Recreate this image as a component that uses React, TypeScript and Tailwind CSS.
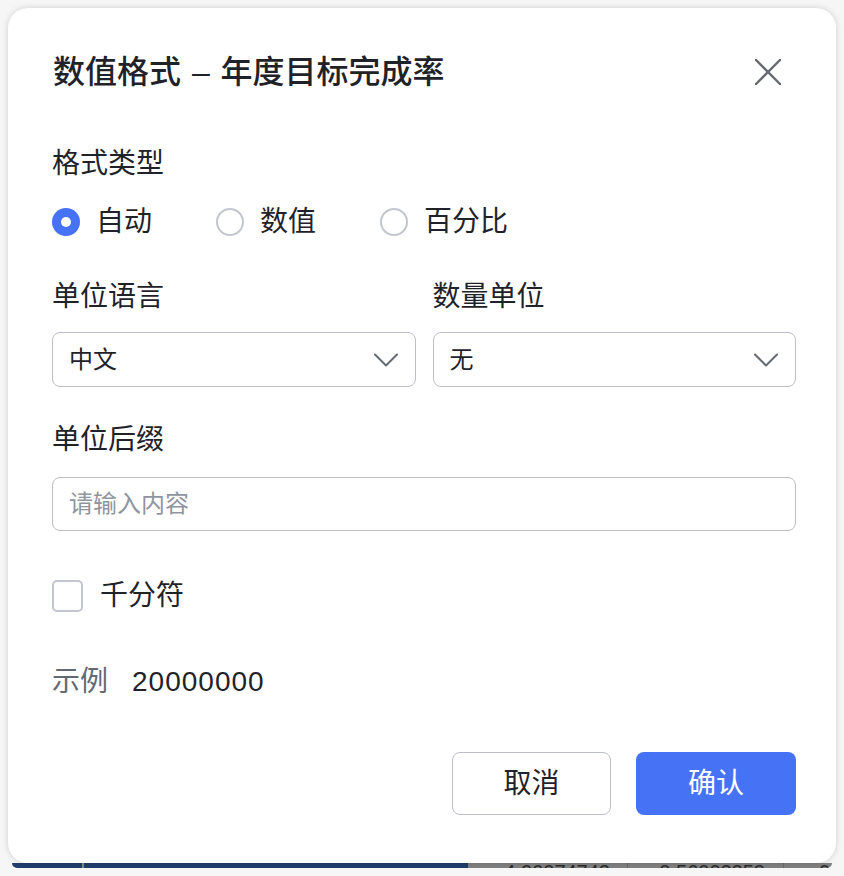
const font = { fontFamily: '"Liberation Sans", "Noto Sans CJK SC", sans-serif' };

function Chevron() {
  return (
    <svg width="24" height="24" viewBox="0 0 24 24" fill="none" className="text-[#646a73]">
      <path d="M1 6.5l11 11 11-11" stroke="currentColor" strokeWidth="2" strokeLinecap="round" strokeLinejoin="round" />
    </svg>
  );
}

function CloseIcon() {
  return (
    <svg width="26" height="26" viewBox="0 0 26 26" fill="none" className="mr-[15px] text-[#646a73]">
      <path d="M1 1l24 24M25 1L1 25" stroke="currentColor" strokeWidth="2.4" strokeLinecap="round" />
    </svg>
  );
}

function Radio({ label, checked }: { label: string; checked?: boolean }) {
  return (
    <label className="flex items-center gap-[16px]">
      {checked ? (
        <span className="flex size-[28px] items-center justify-center rounded-full bg-[#4673f6]">
          <span className="size-[10px] rounded-full bg-white" />
        </span>
      ) : (
        <span className="size-[28px] rounded-full border-2 border-[#c3c6cc] bg-white" />
      )}
      <span className="text-[28px] leading-[40px] text-[#1f2329]">{label}</span>
    </label>
  );
}

function Select({ value }: { value: string }) {
  return (
    <div className="flex h-[55px] flex-1 items-center justify-between rounded-[8px] border-[1.5px] border-[#bcc0c6] bg-white pl-[16px] pr-[17px]">
      <span className="text-[24px] text-[#1f2329]">{value}</span>
      <Chevron />
    </div>
  );
}

export default function App() {
  return (
    <div className="min-h-[876px] w-[844px] bg-[#f6f6f6] p-[8px]" style={font}>
      <div className="flex w-[828px] flex-col">
        <div className="relative z-10 flex h-[855px] flex-col rounded-[20px] bg-white pl-[44px] pr-[40px] pt-[44px] shadow-[0_0_6px_rgba(0,0,0,0.16)]">
          <div className="flex h-[40px] items-center justify-between">
            <h2 className="pl-px text-[32px] font-medium leading-[40px] text-[#1f2329]">
              数值格式 <span className="px-[2px]">–</span> 年度目标完成率
            </h2>
            <CloseIcon />
          </div>

          <div className="mt-[52px] text-[28px] leading-[40px] text-[#1f2329]">格式类型</div>
          <div className="mt-[18px] flex h-[40px] items-center gap-[64px]">
            <Radio label="自动" checked />
            <Radio label="数值" />
            <Radio label="百分比" />
          </div>

          <div className="mt-[35px] flex gap-[17px]">
            <div className="flex flex-1 flex-col">
              <div className="text-[28px] leading-[40px] text-[#1f2329]">单位语言</div>
              <div className="mt-[15px] flex">
                <Select value="中文" />
              </div>
            </div>
            <div className="flex flex-1 flex-col">
              <div className="text-[28px] leading-[40px] text-[#1f2329]">数量单位</div>
              <div className="mt-[15px] flex">
                <Select value="无" />
              </div>
            </div>
          </div>

          <div className="mt-[33px] text-[28px] leading-[40px] text-[#1f2329]">单位后缀</div>
          <input
            className="mt-[17px] h-[54px] w-full rounded-[8px] border-[1.5px] border-[#bcc0c6] bg-white px-[16px] text-[24px] text-[#1f2329] outline-none placeholder:text-[#8f959e]"
            placeholder="请输入内容"
          />

          <label className="mt-[45px] flex h-[40px] items-center gap-[17px]">
            <span className="h-[32px] w-[31px] rounded-[5px] border-2 border-[#c3c6cc] bg-white" />
            <span className="text-[28px] leading-[40px] text-[#1f2329]">千分符</span>
          </label>

          <div className="mt-[46px] flex h-[40px] items-center gap-[24px] text-[28px] leading-[40px]">
            <span className="text-[#646a73]">示例</span>
            <span className="tracking-[1px] text-[#1f2329]">20000000</span>
          </div>

          <div className="mt-[50px] flex justify-end gap-[25px]">
            <button
              type="button"
              className="h-[63px] w-[159px] rounded-[8px] border-[1.5px] border-[#bcc0c6] bg-white text-[28px] text-[#1f2329]"
            >
              取消
            </button>
            <button
              type="button"
              className="h-[63px] w-[160px] rounded-[8px] bg-[#4673f6] text-[28px] text-white"
            >
              确认
            </button>
          </div>
        </div>

        <div className="mx-[4px] flex h-[5px] overflow-hidden rounded-b-[14px] text-[20px] leading-none text-[#2b2b2b]">
          <div className="w-[70px] bg-[#213e6c]" />
          <div className="w-[2px] bg-[#8a8a8a]" />
          <div className="w-[384px] bg-[#213e6c]" />
          <div className="flex w-[159px] justify-end bg-[#808080] pr-[17px]">
            <span className="-mt-px">4.00074742</span>
          </div>
          <div className="w-px bg-[#6a6a6a]" />
          <div className="flex w-[155px] justify-end bg-[#808080] pr-[18px]">
            <span className="-mt-px">0.56002253</span>
          </div>
          <div className="w-px bg-[#6a6a6a]" />
          <div className="flex flex-1 bg-[#808080] pl-[35px]">
            <span className="-mt-px">0</span>
          </div>
        </div>
      </div>
    </div>
  );
}
